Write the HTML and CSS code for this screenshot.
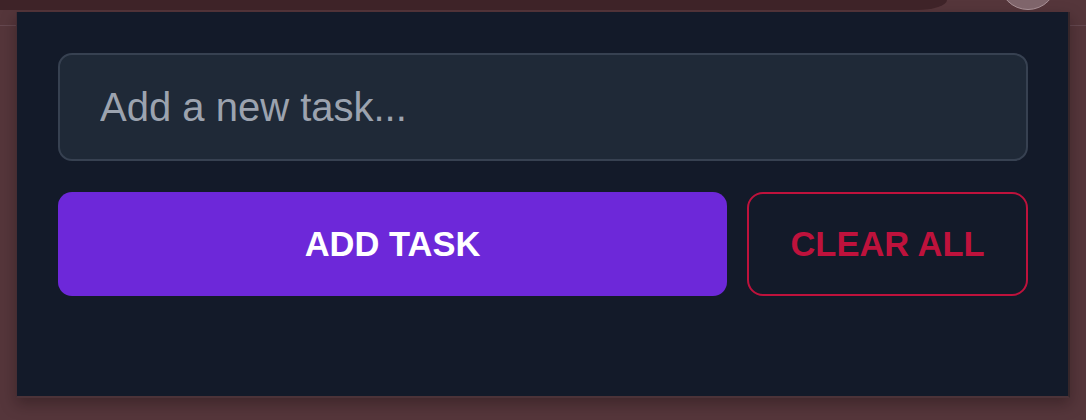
FILE: index.html
```html
<!DOCTYPE html>
<html lang="en">
<head>
<meta charset="utf-8">
<title>Tasks</title>
<link rel="stylesheet" href="styles.css">
</head>
<body>
  <header class="topbar">
    <div class="tab"></div>
    <div class="avatar"></div>
  </header>
  <main class="panel">
    <input class="task-input" type="text" placeholder="Add a new task...">
    <div class="actions">
      <button class="btn btn-add" type="button">ADD TASK</button>
      <button class="btn btn-clear" type="button">CLEAR ALL</button>
    </div>
  </main>
</body>
</html>
```
FILE: styles.css
```css
* { box-sizing: border-box; }

html, body { height: 100%; }

body {
  margin: 0;
  font-family: "Liberation Sans", Arial, sans-serif;
  background: linear-gradient(#654850, #654850) 0 25px / 100% 1px no-repeat, #55363b;
  overflow: hidden;
}

.topbar {
  position: relative;
  height: 10px;
  display: flex;
}

.tab {
  width: 947px;
  height: 10px;
  background: #3e2328;
  border-bottom-right-radius: 30px 10px;
}

.avatar {
  position: absolute;
  left: 999px;
  top: -48px;
  width: 58px;
  height: 58px;
  border-radius: 50%;
  background: #7f656b;
  border: 1px solid #a89096;
}

.panel {
  margin: 2px 16px 0 16px;
  background: #131a29;
  border-left: 1px solid #462d33;
  border-right: 2px solid #36262a;
  border-bottom: 2px solid #4c3338;
  padding: 41px 40px 100px 41px;
  box-shadow: 0 6px 14px rgba(20, 8, 12, 0.35);
}

.task-input {
  display: block;
  width: 100%;
  height: 108px;
  margin: 0;
  padding: 0 40px;
  background: #1f2937;
  border: 2px solid #374151;
  border-radius: 14px;
  color: #e5e7eb;
  font-family: "Liberation Sans", Arial, sans-serif;
  font-size: 40px;
  outline: none;
}

.task-input::placeholder {
  color: #9ca3af;
  opacity: 1;
}

.actions {
  display: flex;
  gap: 20px;
  margin-top: 31px;
}

.btn {
  height: 104px;
  margin: 0;
  padding: 0;
  font-family: "Liberation Sans", Arial, sans-serif;
  font-size: 34.5px;
  font-weight: 700;
  cursor: pointer;
}

.btn-add {
  flex: 1;
  background: #6d28d9;
  color: #ffffff;
  border: none;
  border-radius: 14px;
}

.btn-clear {
  width: 281px;
  background: transparent;
  color: #be123c;
  border: 2px solid #be123c;
  border-radius: 16px;
}
```
